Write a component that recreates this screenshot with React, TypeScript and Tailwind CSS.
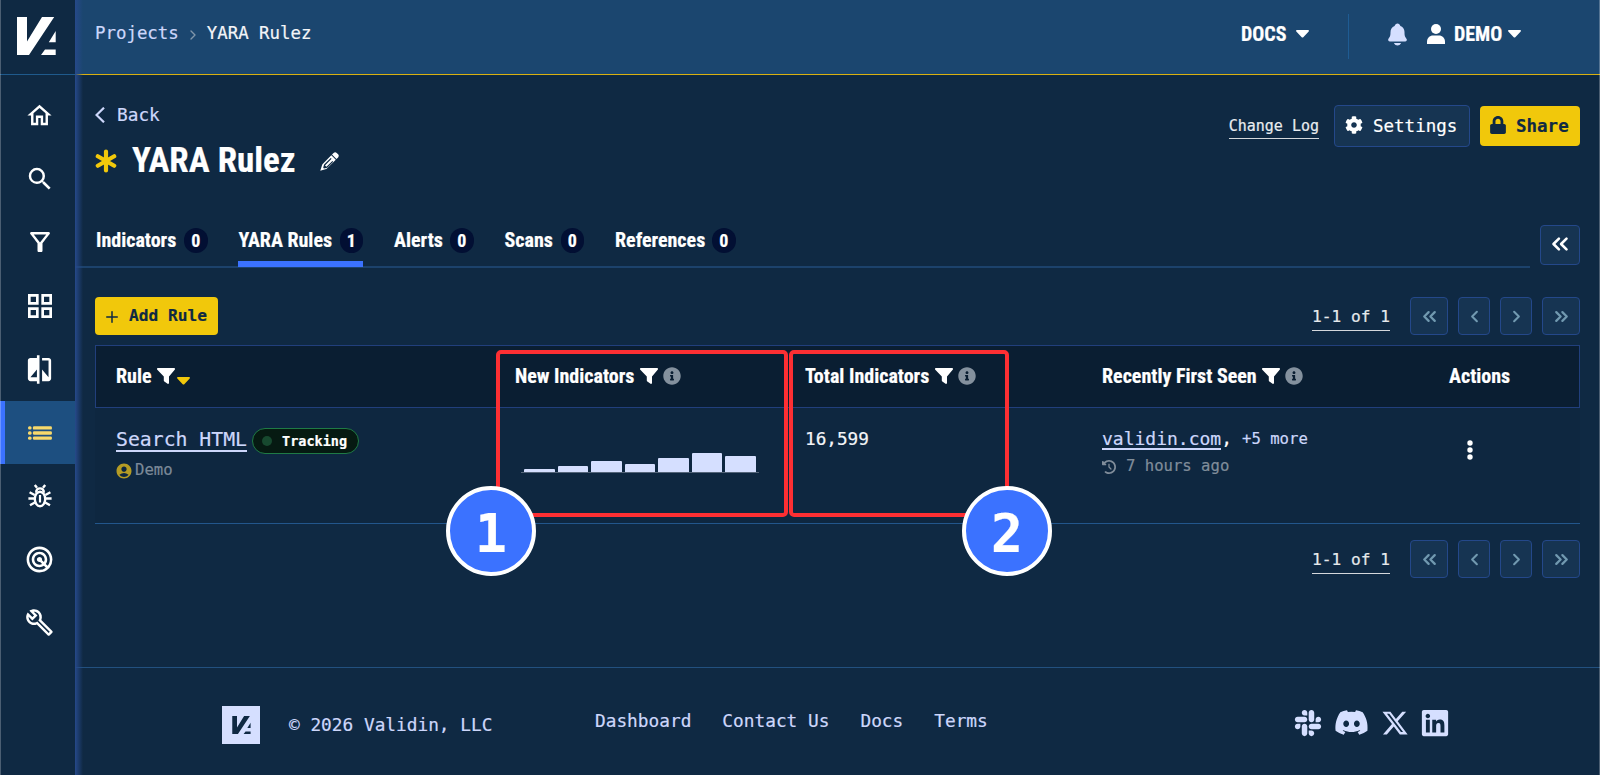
import React from "react";
import {
  MdAccountCircle,
  MdCompare,
  MdGridView,
  MdOutlineBuild,
  MdOutlineFilterAlt,
  MdOutlineHome,
  MdRadar,
  MdSearch,
} from "react-icons/md";
import { FaClockRotateLeft, FaDiscord, FaLinkedin, FaSlack, FaXTwitter } from "react-icons/fa6";
import { FaCog, FaInfoCircle, FaLock } from "react-icons/fa";
import { IoNotifications } from "react-icons/io5";
import { ChevronLeft, ChevronRight, ChevronsLeft, ChevronsRight, Plus } from "lucide-react";

const tabs = [
  { label: "Indicators", count: 0, width: "w-[80px]" },
  { label: "YARA Rules", count: 1, width: "w-[93px]" },
  { label: "Alerts", count: 0, width: "w-[48px]" },
  { label: "Scans", count: 0, width: "w-[48px]" },
  { label: "References", count: 0, width: "w-[89px]" },
];

const history = [3, 6, 11, 8, 14, 19, 16.5];

function ListIcon() {
  return (
    <svg width="24" height="14" viewBox="0 0 24 14" fill="currentColor">
      {[0.2, 5.3, 10.4].map((y) => (
        <g key={y}>
          <rect x="0" y={y} width="3.6" height="3.4" rx="1.5" />
          <rect x="4.9" y={y} width="19" height="3.4" rx="1.2" />
        </g>
      ))}
    </svg>
  );
}

function BugIcon() {
  return (
    <svg width="24" height="24" viewBox="0 0 24 24" fill="none" stroke="currentColor" strokeWidth="2.4">
      <ellipse cx="12" cy="15" rx="5.2" ry="7.2" />
      <path d="M12 11v7.5" strokeWidth="2.2" />
      <path d="M6.800 1l2.200 2.800M17.200 1L15 3.800M8.200 8.600c-.4-5.600 8-5.600 7.600 0" />
      <path d="M.4 14.500h6M17.600 14.500h6M1.600 8.300l5 2.700M22.400 8.300l-5 2.700M2 21.300l4.800-2.800M22 21.300l-4.800-2.800" />
    </svg>
  );
}

function UserIcon() {
  return (
    <svg width="18" height="20" viewBox="0 0 18 20" fill="currentColor">
      <circle cx="9" cy="5" r="5" />
      <path d="M0 20v-2c0-4 2.600-6.500 6.200-6.500h5.600c3.600 0 6.200 2.500 6.200 6.500v2z" />
    </svg>
  );
}

function Asterisk() {
  return (
    <svg width="22" height="24" viewBox="0 0 22 24" fill="none" stroke="currentColor" strokeWidth="4.2" strokeLinecap="round">
      <path d="M11 2.500v19M2.800 7.200l16.400 9.600M19.200 7.200L2.800 16.800" />
    </svg>
  );
}

function Caret({ className = "" }: { className?: string }) {
  return (
    <svg className={className} width="13" height="8" viewBox="0 0 13 8" fill="currentColor">
      <path d="M1 0h11c.9 0 1.300.9.7 1.500L7.300 7.200c-.5.5-1.100.5-1.600 0L.3 1.500C-.3.9.1 0 1 0z" />
    </svg>
  );
}

function Funnel() {
  return (
    <svg width="18" height="16" viewBox="0 0 18 16" fill="currentColor">
      <path d="M1 0h16c.9 0 1.300 1 .7 1.700L12 8.500v6.600c0 .8-.8 1.100-1.400.6l-3.300-2.300c-.3-.2-.5-.5-.5-.8V8.500L.3 1.700C-.3 1 .1 0 1 0z" />
    </svg>
  );
}

function Pencil() {
  return (
    <svg width="19" height="19" viewBox="0 0 19 19" fill="currentColor">
      <path d="M13.600.9c1-.9 2.200-.9 3.100 0l1.400 1.400c.9.900.9 2.100 0 3.100l-1.600 1.500-4.500-4.500z" />
      <path
        fillRule="evenodd"
        d="M11.300 3.200l4.500 4.500-8.600 8.600c-.3.300-.7.500-1.100.6L.3 18.800l1.800-5.900c.1-.4.300-.7.600-1zM5 13.400l6.600-6.600-.9-.9-6.600 6.600-.9 3.300.8.800 3.200-.9 6-6-.8-.8-5.900 5.900z"
      />
    </svg>
  );
}

function Logo({ className }: { className: string }) {
  return (
    <svg className={className} viewBox="0 0 39 38" fill="currentColor">
      <path d="M0 0h10v24.500L25 0h12.200L12 38H0z" />
      <path d="M38.700 14v11.300h-6.900zM28 32.500h10.700V38H24z" />
    </svg>
  );
}

function NavItem({ children, active = false }: { children: React.ReactNode; active?: boolean }) {
  return (
    <div
      className={`flex h-[63.4px] items-center justify-center border-l-[5px] pr-px ${
        active ? "border-[#3b72ff] bg-[#1d4f80] text-[#f7d96b]" : "border-transparent"
      }`}
    >
      {children}
    </div>
  );
}

function PageButton({ children, wide = false }: { children: React.ReactNode; wide?: boolean }) {
  return (
    <button
      className={`flex h-[38px] items-center justify-center rounded border border-[#24488a] bg-[#163452] text-[#7199b0] ${
        wide ? "w-[38px]" : "w-8"
      }`}
    >
      {children}
    </button>
  );
}

function Pagination() {
  return (
    <div className="flex items-center">
      <span className="mr-5 border-b border-[#d5d8dc] pt-px text-[16.2px] leading-[27px] text-[#e6e9ec]">1-1 of 1</span>
      <div className="flex gap-2.5">
        <PageButton wide><ChevronsLeft size={21} strokeWidth={2.6} /></PageButton>
        <PageButton><ChevronLeft size={19} strokeWidth={2.6} /></PageButton>
        <PageButton><ChevronRight size={19} strokeWidth={2.6} /></PageButton>
        <PageButton wide><ChevronsRight size={21} strokeWidth={2.6} /></PageButton>
      </div>
    </div>
  );
}

function Heading({ label, width }: { label: string; width: string }) {
  return (
    <div className="flex items-center">
      <span className={`whitespace-nowrap ${width}`}>{label}</span>
      <Funnel />
      <FaInfoCircle className="ml-[5px] text-[#84919e]" size={18} />
    </div>
  );
}

function Marker({ children, className }: { children: React.ReactNode; className: string }) {
  return (
    <div
      className={`absolute flex size-[90px] items-center justify-center rounded-full border-4 border-white bg-[#3b72ff] pt-1 text-[53px] leading-none font-bold ${className}`}
    >
      {children}
    </div>
  );
}

export default function App() {
  return (
    <div className="relative flex h-[775px] w-[1600px] overflow-hidden bg-[#0f2943] font-['DejaVu_Sans_Mono',monospace] text-white [-webkit-text-stroke:0.2px]">
      <aside className="relative flex w-[75px] shrink-0 flex-col">
        <div className="flex h-[75px] items-start border-b border-[#1f5a8c] pt-[17px] pl-[17px]">
          <Logo className="h-[38px] w-[39px]" />
        </div>
        <nav className="flex flex-col pt-[9px]">
          <NavItem><MdOutlineHome size={29} /></NavItem>
          <NavItem><MdSearch size={30} /></NavItem>
          <NavItem><MdOutlineFilterAlt size={30} /></NavItem>
          <NavItem><MdGridView size={32} /></NavItem>
          <NavItem><MdCompare size={31} /></NavItem>
          <NavItem active><ListIcon /></NavItem>
          <NavItem><BugIcon /></NavItem>
          <NavItem><MdRadar size={31} /></NavItem>
          <NavItem><MdOutlineBuild size={29} /></NavItem>
        </nav>
        {/* glow along the edge of the sidebar */}
        <div className="absolute inset-y-0 left-full w-2 bg-gradient-to-r from-[#26498a] to-transparent" />
      </aside>

      <div className="flex min-w-0 flex-1 flex-col">
        <header className="flex h-[75px] shrink-0 items-start border-b border-[#d9b010] bg-[#1b466f] pl-5">
          <div className="flex h-[67px] items-center text-[17.4px]">
            <span className="text-[#cdd7fb]">Projects</span>
            <ChevronRight className="mx-1.5 mt-0.5 text-[#8096ab]" size={16} />
            <span className="text-[#f3f5f8]">YARA Rulez</span>
          </div>
          <div className="ml-auto flex h-[67px] items-center font-['Roboto_Condensed'] text-[20px] font-bold">
            <span className="w-[55px]">DOCS</span>
            <Caret />
            <div className="mt-1.5 ml-[39px] h-[45px] w-px bg-[#1f5c93]" />
            <IoNotifications className="mt-0.5 ml-9 mr-[17px] text-[#d5dfff]" size={25} />
            <UserIcon />
            <span className="ml-[9px] w-[54px]">DEMO</span>
            <Caret className="mr-[79px]" />
          </div>
        </header>

        <main className="flex h-[592px] shrink-0 flex-col">
          <div className="flex h-[133px] justify-between pr-5 pl-5">
            <div className="pt-[29px]">
              <div className="flex h-[22px] items-center text-[17.8px] text-[#cdd7fb]">
                <svg width="10" height="16" viewBox="0 0 10 16" fill="none" stroke="currentColor" strokeWidth="2.2">
                  <path d="M9 .7L1.500 8 9 15.300" />
                </svg>
                <span className="ml-3">Back</span>
              </div>
              <div className="mt-[15px] flex h-10 items-center">
                <span className="text-[#f1c80b]"><Asterisk /></span>
                <h1 className="ml-[15px] w-[188px] font-['Roboto_Condensed'] text-[35px] leading-10 font-bold whitespace-nowrap">
                  YARA Rulez
                </h1>
                <Pencil />
              </div>
            </div>
            <div className="flex items-start pt-[30px]">
              <span className="mt-[9px] mr-[15px] border-b border-[#d5d8dc] text-[15px] leading-[24px] text-[#e9ecef]">
                Change Log
              </span>
              <button className="mr-2.5 flex h-[42px] w-[136px] items-center rounded border border-[#24488a] bg-[#163452] pl-[10px] text-[17.5px]">
                <FaCog className="mr-[10px] mb-0.5" size={18} />
                Settings
              </button>
              <button className="mt-px flex h-10 w-[100px] items-center rounded bg-[#f1c80b] pl-[9px] text-[17.5px] font-bold text-[#0f2943]">
                <FaLock className="mb-0.5" size={18} />
                <span className="ml-[9px]">Share</span>
              </button>
            </div>
          </div>

          <div className="flex h-[60px] items-start pr-5">
            <div className="flex h-full w-[1455px] gap-[30px] border-b-2 border-[#1c426c] pl-5 font-['Roboto_Condensed'] font-bold">
              {tabs.map((tab, i) => (
                <div
                  key={tab.label}
                  className={`flex h-[59px] items-start pt-5 ${i === 1 ? "border-b-[6px] border-[#3b72ff]" : ""}`}
                >
                  <span className={`pl-px text-[20px] leading-[25px] whitespace-nowrap ${tab.width}`}>{tab.label}</span>
                  <span className="ml-[9px] flex h-[25px] w-[23.5px] items-center justify-center rounded-full bg-[#020f33] text-[18px]">
                    {tab.count}
                  </span>
                </div>
              ))}
            </div>
            <button className="mt-[17px] ml-auto flex size-10 items-center justify-center rounded border border-[#24488a] bg-[#163452] pr-px pb-0.5">
              <ChevronsLeft size={26} strokeWidth={2.4} />
            </button>
          </div>

          <section className="px-5 pt-[29px]">
            <div className="flex h-[38px] items-center justify-between">
              <button className="flex h-[38px] w-[122.5px] items-center rounded bg-[#f1c80b] pt-px pl-2 text-[16.2px] font-bold whitespace-nowrap text-[#0f2943]">
                <Plus className="mr-2 shrink-0" size={18} />
                Add Rule
              </button>
              <Pagination />
            </div>

            <div className="relative mt-2.5">
              <div className="grid h-[63px] grid-cols-[399px_290px_297px_347px_1fr] items-center border border-[#213f7c] bg-[#0a1e32] pb-px pl-5 font-['Roboto_Condensed'] text-[20px] font-bold">
                <div className="flex items-center">
                  <span className="w-[41px]">Rule</span>
                  <Funnel />
                  <Caret className="mt-2.5 ml-0.5 text-[#f1c80b]" />
                </div>
                <Heading label="New Indicators" width="w-[125px]" />
                <Heading label="Total Indicators" width="w-[130px]" />
                <Heading label="Recently First Seen" width="w-[160px]" />
                <span>Actions</span>
              </div>

              <div className="grid h-[116px] grid-cols-[400px_289px_297px_348px_1fr] items-start border-b border-[#22568c] bg-[#0e2740] pl-[21px]">
                <div className="pt-5">
                  <div className="flex h-[26px] items-center">
                    <span className="border-b-2 border-[#cdd7fb] text-[19.8px] leading-5 text-[#cdd7fb]">Search_HTML</span>
                    <span className="ml-[5px] flex h-[26px] w-[107px] items-center rounded-full border border-[#1f7a45] bg-[#061a12] pl-[9px] text-[13.5px] font-bold">
                      <i className="mr-[10px] size-2.5 rounded-full bg-[#17492f]" />
                      Tracking
                    </span>
                  </div>
                  <div className="mt-[9px] flex h-4 items-center text-[15.6px] text-[#7c8a99]">
                    <MdAccountCircle className="-ml-px mr-0.5 text-[#b59c24]" size={18} />
                    Demo
                  </div>
                </div>
                <div className="flex h-[65px] items-end">
                  <div className="ml-[5px] flex w-[238px] items-end gap-[3px] border-b border-[#54657a] pl-[3px]">
                    {history.map((value, i) => (
                      <div key={i} className="w-[30.5px] rounded-t-[1px] bg-[#d5dfff]" style={{ height: value }} />
                    ))}
                  </div>
                </div>
                <div className="pt-[19px] text-[17.7px] leading-6 text-[#f3f5f8]">16,599</div>
                <div className="pt-[19px]">
                  <div className="flex h-6 items-center whitespace-pre">
                    <span className="border-b-2 border-[#cdd7fb] text-[18px] leading-[19px] text-[#cdd7fb]">validin.com</span>
                    <span className="text-[18px] leading-5">,</span>
                    <span className="ml-[10px] pt-0.5 text-[15.6px] text-[#cdd7fb]">+5 more</span>
                  </div>
                  <div className="mt-[6px] flex h-5 items-center text-[15.6px] text-[#808d9a]">
                    <FaClockRotateLeft className="mr-2.5" size={14} />
                    7 hours ago
                  </div>
                </div>
                <svg className="mt-8 ml-[17px]" width="6" height="20" viewBox="0 0 6 20" fill="currentColor">
                  <circle cx="3" cy="3" r="2.7" />
                  <circle cx="3" cy="10" r="2.7" />
                  <circle cx="3" cy="17" r="2.7" />
                </svg>
              </div>

              {/* callouts over the two indicator columns */}
              <div className="absolute top-[5px] left-[401px] h-[167px] w-[292px] rounded-[5px] border-4 border-[#fd2f33]" />
              <div className="absolute top-[5px] left-[694px] h-[167px] w-[220px] rounded-[5px] border-4 border-[#fd2f33]" />
              <Marker className="top-[141px] left-[351px]">1</Marker>
              <Marker className="top-[141px] left-[867px]">2</Marker>
            </div>

            <div className="mt-4 flex justify-end">
              <Pagination />
            </div>
          </section>
        </main>

        <footer className="flex flex-1 items-start border-t border-[#22507f] pl-[147px] text-[17.8px] text-[#cdd7fb]">
          <div className="mt-[38px] flex size-[38px] items-center justify-center bg-[#d5dfff] text-[#0f2943]">
            <Logo className="h-[18px] w-[19px]" />
          </div>
          <span className="mt-[45px] ml-[29px] w-[306px] leading-6">© 2026 Validin, LLC</span>
          <div className="mt-[41px] flex gap-[31px] leading-6">
            <span>Dashboard</span>
            <span>Contact Us</span>
            <span>Docs</span>
            <span>Terms</span>
          </div>
          <div className="mt-[37px] mr-[150px] ml-auto flex items-center text-[#d5dfff]">
            <FaSlack className="mr-[11px]" size={30} />
            <FaDiscord className="mr-3" size={35} />
            <FaXTwitter className="mr-[11px]" size={28} />
            <FaLinkedin size={30} />
          </div>
        </footer>
      </div>

      {/* thin window edge */}
      <div className="absolute inset-y-0 left-0 w-px bg-white/25" />
      <div className="absolute inset-y-0 right-0 w-px bg-white/25" />
    </div>
  );
}
